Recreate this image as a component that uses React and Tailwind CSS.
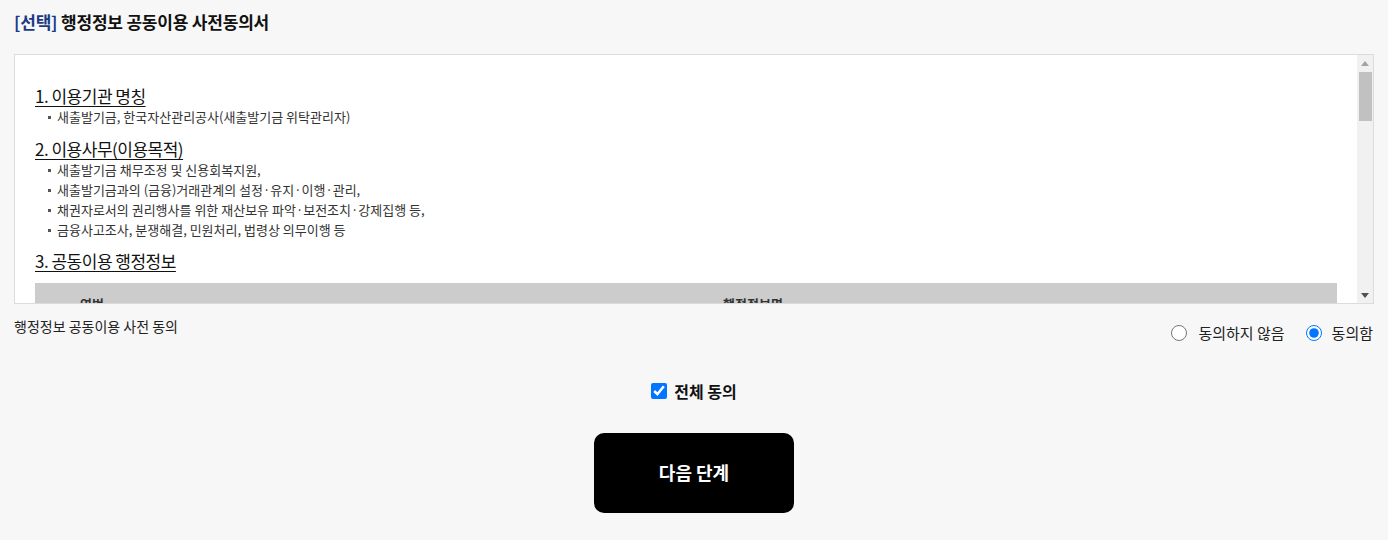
import React from "react";

const font = { fontFamily: '"Noto Sans CJK KR", "Noto Sans", sans-serif' };

const rows = [
  "주민등록표 초본",
  "주민등록표 등본",
  "가족관계증명서",
  "기본증명서",
  "건강보험자격득실확인서",
  "건강보험료 납부확인서",
];

function Bullet({ children }) {
  return (
    <li className="flex items-center h-5 pl-[13px] text-[13px] text-[#333]">
      <span className="w-[3px] h-[3px] bg-[#555] mr-[6px] shrink-0" />
      <span>{children}</span>
    </li>
  );
}

function Heading({ children, className = "" }) {
  return (
    <h3 className={`text-[17px] leading-[22px] text-[#111] underline underline-offset-[3px] decoration-1 tracking-[-0.5px] ${className}`}>
      {children}
    </h3>
  );
}

function ScrollBar() {
  return (
    <div className="w-[16px] shrink-0 bg-[#f1f1f1] flex flex-col items-center">
      <div className="h-[16px] w-full flex items-center justify-center">
        <svg width="8" height="5" viewBox="0 0 8 5">
          <path d="M0 5 L4 0 L8 5 Z" fill="#a3a3a3" />
        </svg>
      </div>
      <div className="w-[13px] h-[49px] bg-[#c1c1c1] mt-[1px]" />
      <div className="flex-1" />
      <div className="h-[16px] w-full flex items-center justify-center">
        <svg width="8" height="5" viewBox="0 0 8 5">
          <path d="M0 0 L8 0 L4 5 Z" fill="#505050" />
        </svg>
      </div>
    </div>
  );
}

export default function App() {
  return (
    <div className="min-h-[540px] bg-[#f7f7f7] px-[14px] pt-[10px]" style={font}>
      <h2 className="text-[17px] leading-6 font-bold text-[#111] tracking-[-0.2px]">
        <span className="text-[#1b3a86]">[선택]</span> 행정정보 공동이용 사전동의서
      </h2>

      <div className="mt-[20px] h-[250px] border border-[#dcdcdc] bg-white flex">
        <div className="flex-1 overflow-hidden pl-[20px] pr-[20px] pt-[30px]">
          <Heading>1. 이용기관 명칭</Heading>
          <ul>
            <Bullet>새출발기금, 한국자산관리공사(새출발기금 위탁관리자)</Bullet>
          </ul>
          <Heading className="mt-[11px]">2. 이용사무(이용목적)</Heading>
          <ul>
            <Bullet>새출발기금 채무조정 및 신용회복지원,</Bullet>
            <Bullet>새출발기금과의 (금융)거래관계의 설정·유지·이행·관리,</Bullet>
            <Bullet>채권자로서의 권리행사를 위한 재산보유 파악·보전조치·강제집행 등,</Bullet>
            <Bullet>금융사고조사, 분쟁해결, 민원처리, 법령상 의무이행 등</Bullet>
          </ul>
          <Heading className="mt-[10px]">3. 공동이용 행정정보</Heading>
          <table className="mt-[11px] w-full border-collapse text-[13px] text-[#333]">
            <thead>
              <tr className="bg-[#cccccc] h-[40px]">
                <th className="w-[114px] font-bold text-center align-top pt-[11px]">연번</th>
                <th className="font-bold text-center align-top pt-[11px] pl-[20px]">행정정보명</th>
              </tr>
            </thead>
            <tbody>
              {rows.map((r, i) => (
                <tr key={i} className="h-[40px] border-b border-[#e5e5e5]">
                  <td className="text-center">{i + 1}</td>
                  <td className="pl-[20px]">{r}</td>
                </tr>
              ))}
            </tbody>
          </table>
        </div>
        <ScrollBar />
      </div>

      <div className="flex justify-between items-start mt-[12px]">
        <p className="text-[14px] leading-5 text-[#222]">행정정보 공동이용 사전 동의</p>
        <div className="flex items-center mt-[6px] text-[15px] text-[#222] pr-[1px]">
          <label className="flex items-center">
            <input type="radio" name="agree" className="w-4 h-4 m-0" />
            <span className="ml-[11px]">동의하지 않음</span>
          </label>
          <label className="flex items-center ml-[21px]">
            <input type="radio" name="agree" defaultChecked className="w-4 h-4 m-0" />
            <span className="ml-[10px]">동의함</span>
          </label>
        </div>
      </div>

      <div className="flex justify-center mt-[34px]">
        <label className="flex items-center text-[16px] font-bold text-[#111]">
          <input type="checkbox" defaultChecked className="w-4 h-4 m-0" />
          <span className="ml-[7px]">전체 동의</span>
        </label>
      </div>

      <div className="flex justify-center mt-[30px]">
        <button className="w-[200px] h-[80px] bg-black text-white rounded-[10px] text-[18px] font-bold">
          다음 단계
        </button>
      </div>
    </div>
  );
}
